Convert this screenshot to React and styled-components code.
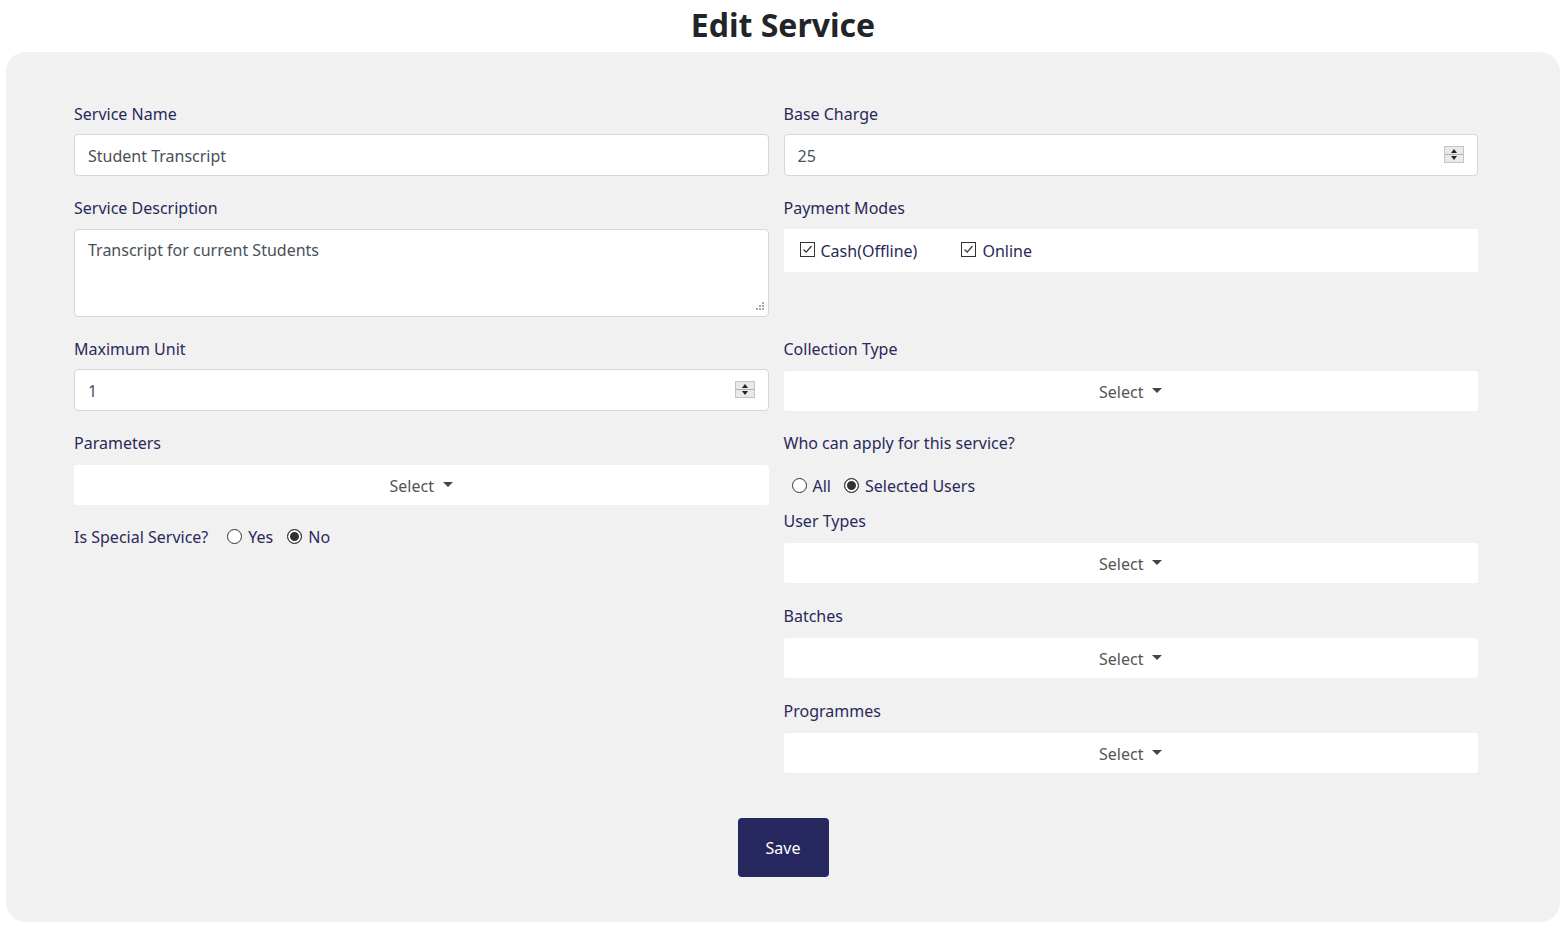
import React from "react";
import styled, { createGlobalStyle } from "styled-components";

const GlobalStyle = createGlobalStyle`
  body {
    margin: 0 6px;
    background: #ffffff;
    font-family: "Noto Sans", "Open Sans", "Liberation Sans", sans-serif;
  }
  * { box-sizing: border-box; }
`;

const Check = () => (
  <CheckBox>
    <svg width="15" height="15" viewBox="0 0 15 15">
      <rect x="0.5" y="0.5" width="14" height="14" fill="#fff" stroke="#333" />
      <path d="M3.5 7.5 L6.2 10.2 L11.5 4" fill="none" stroke="#333" strokeWidth="1.2" />
    </svg>
  </CheckBox>
);

const Radio = ({ checked, label }) => (
  <RadioOption>
    <RadioCircle checked={checked} />
    <span>{label}</span>
  </RadioOption>
);

const Spinner = () => (
  <SpinBox>
    <svg width="20" height="17" viewBox="0 0 20 17">
      <rect x="0.5" y="0.5" width="19" height="16" fill="#e9e9e9" stroke="#c4c4c4" />
      <line x1="1" y1="8.5" x2="19" y2="8.5" stroke="#b0b0b0" />
      <path d="M7 7 L10 3 L13 7 Z" fill="#222" />
      <path d="M7 10 L10 14 L13 10 Z" fill="#222" />
    </svg>
  </SpinBox>
);

const SelectButton = () => (
  <SelectBox type="button">
    Select <Caret />
  </SelectBox>
);

const App = () => {
  return (
    <>
      <GlobalStyle />
      <Title>Edit Service</Title>
      <Card>
        <FormGrid>
          <Field>
            <Label>Service Name</Label>
            <InputWrap>
              <TextInput readOnly value="Student Transcript" />
            </InputWrap>
          </Field>
          <Field>
            <Label>Base Charge</Label>
            <InputWrap>
              <TextInput readOnly value="25" />
              <Spinner />
            </InputWrap>
          </Field>

          <Field>
            <Label>Service Description</Label>
            <InputWrap>
              <TextArea readOnly value="Transcript for current Students" />
              <Grip>
                <svg width="12" height="12" viewBox="0 0 12 12" fill="#a8a8a8">
                  <rect x="8" y="0" width="2" height="2" />
                  <rect x="5" y="3" width="2" height="2" />
                  <rect x="8" y="3" width="2" height="2" />
                  <rect x="2" y="6" width="2" height="2" />
                  <rect x="5" y="6" width="2" height="2" />
                  <rect x="8" y="6" width="2" height="2" />
                </svg>
              </Grip>
            </InputWrap>
          </Field>
          <Field>
            <Label>Payment Modes</Label>
            <CheckPanel>
              <CheckOption>
                <Check />
                Cash(Offline)
              </CheckOption>
              <CheckOption>
                <Check />
                Online
              </CheckOption>
            </CheckPanel>
          </Field>

          <Field>
            <Label>Maximum Unit</Label>
            <InputWrap>
              <TextInput readOnly value="1" />
              <Spinner />
            </InputWrap>
          </Field>
          <Field>
            <Label>Collection Type</Label>
            <SelectButton />
          </Field>

          <Stack>
            <Field>
              <Label>Parameters</Label>
              <SelectButton />
            </Field>
            <InlineRow>
              <InlineLabel>Is Special Service?</InlineLabel>
              <Radio label="Yes" />
              <Radio label="No" checked />
            </InlineRow>
          </Stack>
          <Stack>
            <Field>
              <Label>Who can apply for this service?</Label>
              <RadioRow>
                <Radio label="All" />
                <Radio label="Selected Users" checked />
              </RadioRow>
              <Label>User Types</Label>
              <SelectButton />
            </Field>
            <Field>
              <Label>Batches</Label>
              <SelectButton />
            </Field>
            <Field>
              <Label>Programmes</Label>
              <SelectButton />
            </Field>
          </Stack>
        </FormGrid>
        <Footer>
          <SaveButton type="button">Save</SaveButton>
        </Footer>
      </Card>
    </>
  );
};

const Title = styled.h1`
  margin: 0;
  height: 52px;
  line-height: 50px;
  text-align: center;
  font-size: 32px;
  font-weight: 700;
  color: #212529;
`;

const Card = styled.div`
  background: #f1f1f1;
  border-radius: 20px;
  padding: 50px 68px 45px;
  min-height: 870px;
`;

const FormGrid = styled.div`
  display: grid;
  grid-template-columns: 1fr 1fr;
  column-gap: 15px;
  row-gap: 20px;
  margin-right: 14px;
  align-items: start;
`;

const Field = styled.div`
  display: flex;
  flex-direction: column;
`;

const Stack = styled.div`
  display: flex;
  flex-direction: column;
  gap: 21px;
`;

const Label = styled.label`
  font-size: 16px;
  line-height: 24px;
  color: #29295a;
  margin-bottom: 8px;
`;

const InputWrap = styled.div`
  position: relative;
`;

const TextInput = styled.input`
  width: 100%;
  height: 42px;
  border: 1px solid #d6d6d6;
  border-radius: 4px;
  padding: 1px 13px 0;
  font-family: inherit;
  font-size: 16px;
  color: #495057;
  background: #fff;
  outline: none;
`;

const TextArea = styled.textarea`
  display: block;
  width: 100%;
  height: 88px;
  margin-top: 1px;
  border: 1px solid #d6d6d6;
  border-radius: 4px;
  padding: 8px 13px;
  font-family: inherit;
  font-size: 16px;
  line-height: 24px;
  color: #495057;
  background: #fff;
  resize: none;
  outline: none;
`;

const Grip = styled.span`
  position: absolute;
  right: 3px;
  bottom: 3px;
  display: flex;
`;

const SpinBox = styled.span`
  position: absolute;
  right: 14px;
  top: 12px;
  display: flex;
`;

const CheckPanel = styled.div`
  display: flex;
  align-items: center;
  gap: 44px;
  height: 43px;
  padding-left: 16px;
  background: #fff;
  margin-top: 1px;
`;

const CheckOption = styled.span`
  display: flex;
  align-items: center;
  gap: 6px;
  font-size: 16px;
  color: #29295a;
`;

const CheckBox = styled.span`
  display: flex;
  margin-top: -2px;
`;

const SelectBox = styled.button`
  display: flex;
  align-items: center;
  justify-content: center;
  gap: 9px;
  width: 100%;
  height: 40px;
  margin-top: 2px;
  padding-top: 3px;
  border: none;
  border-radius: 3px;
  background: #fff;
  font-family: inherit;
  font-size: 16px;
  color: #555;
  cursor: pointer;
`;

const Caret = styled.span`
  width: 0;
  height: 0;
  margin-top: -3px;
  border-left: 5px solid transparent;
  border-right: 5px solid transparent;
  border-top: 5px solid #444;
`;

const RadioRow = styled.div`
  display: flex;
  align-items: center;
  gap: 13px;
  height: 24px;
  margin: 11px 0 11px 8px;
`;

const InlineRow = styled.div`
  display: flex;
  align-items: center;
  gap: 14px;
  height: 24px;
  margin-top: -1px;
`;

const InlineLabel = styled.span`
  font-size: 16px;
  color: #29295a;
  margin-right: 5px;
`;

const RadioOption = styled.span`
  display: flex;
  align-items: center;
  gap: 6px;
  font-size: 16px;
  color: #29295a;
`;

const RadioCircle = styled.span`
  width: 15px;
  height: 15px;
  border-radius: 50%;
  border: 1px solid #333;
  background: ${(props) => (props.checked ? "#333" : "#fff")};
  box-shadow: ${(props) => (props.checked ? "inset 0 0 0 2px #fff" : "none")};
  margin-top: -2px;
`;

const Footer = styled.div`
  display: flex;
  justify-content: center;
  margin-top: 45px;
`;

const SaveButton = styled.button`
  width: 91px;
  height: 59px;
  border: none;
  border-radius: 4px;
  background: #272760;
  color: #fff;
  font-family: inherit;
  font-size: 16px;
  cursor: pointer;
`;

export default App;
